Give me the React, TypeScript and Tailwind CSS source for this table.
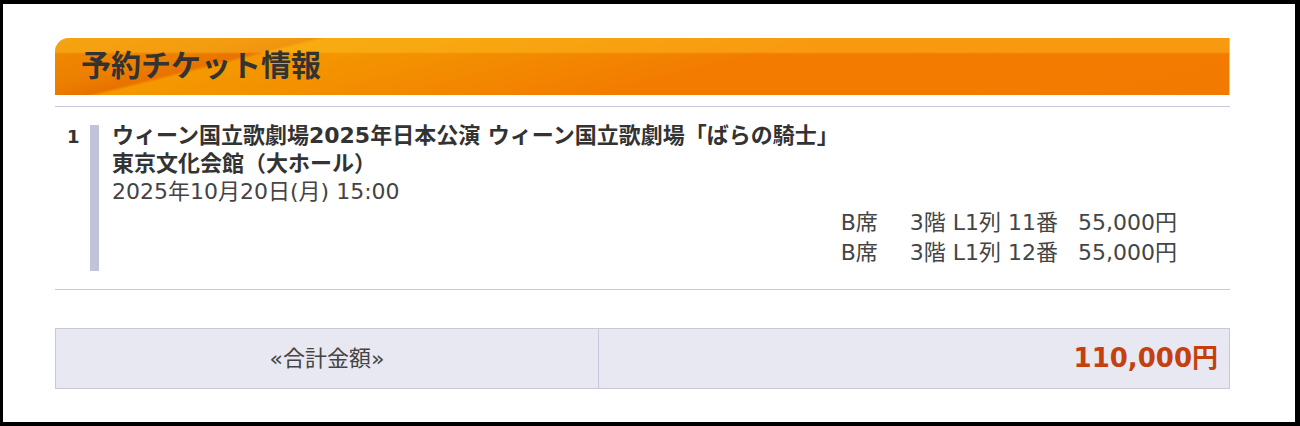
export default function App() {
  const seats = [
    { grade: "B席", place: "3階 L1列 11番", price: "55,000円" },
    { grade: "B席", place: "3階 L1列 12番", price: "55,000円" },
  ];

  return (
    <div className="w-[1300px] h-[426px] bg-black pt-[4px] pl-[3px] pr-[5px] pb-[4px]">
      <div className="h-full bg-white pl-[52px] pr-[65px] pt-[34px] font-['DejaVu_Sans','Noto_Sans_CJK_JP',sans-serif] text-[#333]">
        {/* Header */}
        <div className="h-[57px] rounded-tl-[14px] flex items-center pl-[26px] pb-[8px] border-r border-[#f7c27a] bg-[linear-gradient(to_bottom,rgba(255,200,40,0.4)_0,rgba(255,200,40,0.4)_14px,rgba(255,200,40,0)_16px),linear-gradient(166deg,#f08c00_0%,#ec7e00_14%,#e87200_18.5%,#f49800_19.5%,#f39000_32%,#f37c00_55%,#f37a00_100%)]">
          <h1 className="text-[30px] font-bold leading-none text-[#333] font-['Noto_Sans_CJK_JP',sans-serif]">
            予約チケット情報
          </h1>
        </div>

        <div className="mt-[11px] h-px bg-[#c8c8dc]" />

        {/* Ticket row */}
        <div className="flex pt-[15px]">
          <div className="w-[35px] pl-[12px] pt-[1px] text-[18px] font-bold leading-[28px]">1</div>
          <div className="w-[9px] bg-[#c2c2da] translate-y-[3px]" />
          <div className="ml-[13px] flex-1 pr-[53px]">
            <div className="text-[22px] font-bold leading-[28px]">
              <div>ウィーン国立歌劇場2025年日本公演 ウィーン国立歌劇場「ばらの騎士」</div>
              <div>東京文化会館（大ホール）</div>
            </div>
            <div className="text-[22px] leading-[28px] text-[#444]">2025年10月20日(月) 15:00</div>
            <div className="mt-[2px] flex justify-end">
              <div className="grid grid-cols-[auto_auto_auto] gap-x-[20px] text-[22px] leading-[30px] text-[#444]">
                {seats.map((s, i) => (
                  <div key={i} className="contents">
                    <span className="pr-[12px]">{s.grade}</span>
                    <span>{s.place}</span>
                    <span>{s.price}</span>
                  </div>
                ))}
              </div>
            </div>
          </div>
        </div>

        <div className="mt-[21px] h-px bg-[#c8c8dc]" />

        {/* Total */}
        <div className="mt-[38px] h-[61px] flex border border-[#c8c8dc] bg-[#e8e8f2]">
          <div className="w-[543px] border-r border-[#c8c8dc] flex items-center justify-center text-[22px] text-[#444]">
            «合計金額»
          </div>
          <div className="flex-1 flex items-center justify-end pr-[11px] text-[26px] font-bold text-[#c4410f]">
            110,000円
          </div>
        </div>
      </div>
    </div>
  );
}
